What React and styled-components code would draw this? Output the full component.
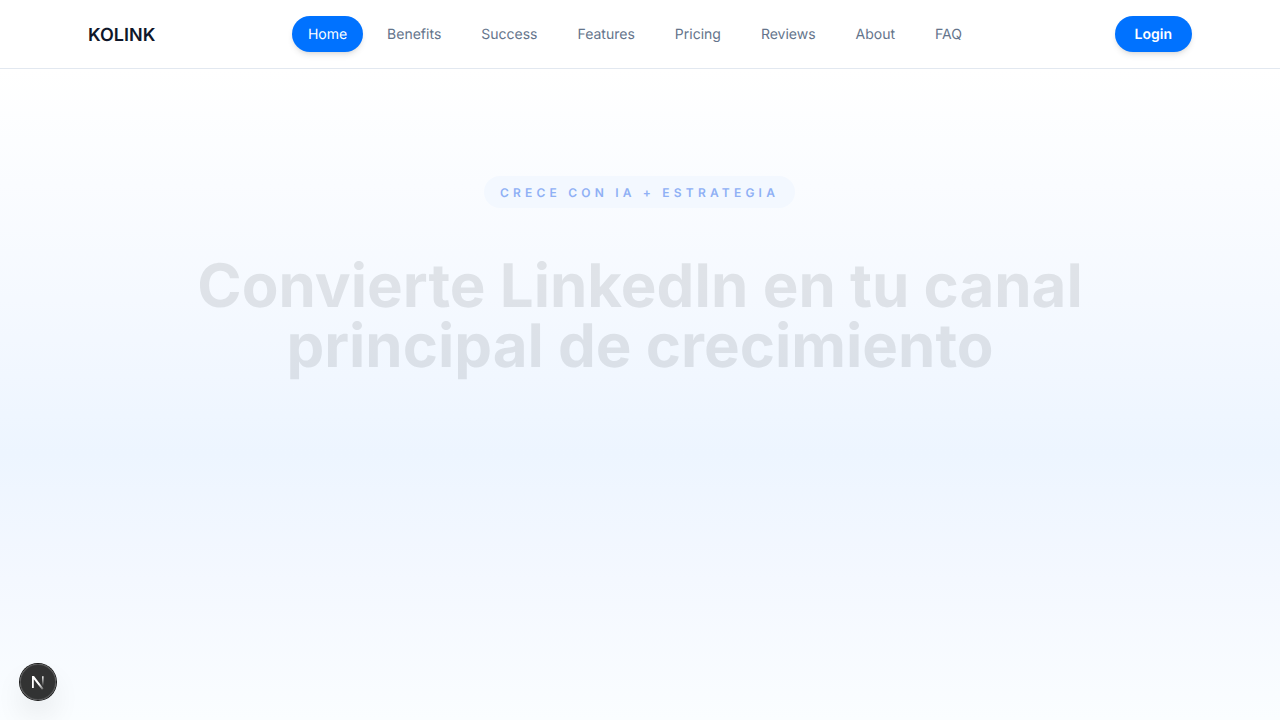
import React from "react";
import styled, { createGlobalStyle } from "styled-components";

const GlobalStyle = createGlobalStyle`
  * { box-sizing: border-box; }
  body { margin: 0; font-family: Inter, "Liberation Sans", sans-serif; background: #fff; overflow: hidden; -webkit-font-smoothing: antialiased; text-rendering: geometricPrecision; }
`;

const Page = styled.div`
  height: 720px;
  display: flex;
  flex-direction: column;
`;

const Header = styled.header`
  height: 69px;
  flex: none;
  border-bottom: 1px solid #e2e8f0;
  background: #fff;
  padding: 0 88px;
  display: flex;
  align-items: center;
  justify-content: space-between;
`;

const Brand = styled.a`
  padding-top: 3px;
  font-size: 18px;
  line-height: 28px;
  font-weight: 600;
  color: #0f172a;
`;

const Nav = styled.nav`
  display: flex;
  gap: 8px;
`;

const NavLink = styled.a`
  padding: 9px 16px 7px;
  border-radius: 999px;
  font-size: 14px;
  line-height: 20px;
  color: ${(p) => (p.$active ? "#fff" : "#64748b")};
  background: ${(p) => (p.$active ? "#0072ff" : "transparent")};
  box-shadow: ${(p) => (p.$active ? "0 4px 6px -1px rgba(0,0,0,.1), 0 2px 4px -2px rgba(0,0,0,.1)" : "none")};
`;

const LoginButton = styled.button`
  height: 36px;
  padding: 2px 20px 0;
  border: 0;
  border-radius: 999px;
  background: #0072ff;
  color: #fff;
  font: 600 14px/20px Inter, sans-serif;
  text-rendering: inherit;
  box-shadow: 0 4px 6px -1px rgba(0,0,0,.1), 0 2px 4px -2px rgba(0,0,0,.1);
`;

const Hero = styled.main`
  flex: 1;
  padding-top: 107px;
  display: flex;
  flex-direction: column;
  align-items: center;
  background: linear-gradient(to bottom, #fff 0, #f5f9ff 230px, #edf5ff 385px, #f4f8ff 510px, #fafdff 651px);
`;

const Eyebrow = styled.span`
  height: 32px;
  margin-right: 1px;
  padding: 9px 16px 7px;
  border-radius: 999px;
  background: #f3f8ff;
  color: #8fb0f5;
  font-size: 12px;
  line-height: 16px;
  font-weight: 600;
  letter-spacing: 4.2px;
  text-transform: uppercase;
`;

const Title = styled.h1`
  width: 896px;
  margin: 48px 0 0;
  font-size: 60px;
  line-height: 60px;
  font-weight: 700;
  text-align: center;
  color: rgba(15, 28, 26, 0.1);
`;

const DevBadge = styled.button`
  position: absolute;
  left: 20px;
  bottom: 20px;
  width: 36px;
  height: 36px;
  padding: 0;
  border: 0;
  border-radius: 50%;
  background: rgba(0, 0, 0, 0.8);
  box-shadow: 0 0 0 1px #171717, inset 0 0 0 1px hsla(0, 0%, 100%, 0.14), 0 16px 32px -8px rgba(0, 0, 0, 0.24);
  display: flex;
  align-items: center;
  justify-content: center;
`;

const Mark = styled.svg`
  flex: none;
`;

const links = ["Home", "Benefits", "Success", "Features", "Pricing", "Reviews", "About", "FAQ"];

export default function App() {
  return (
    <Page>
      <GlobalStyle />
      <Header>
        <Brand>KOLINK</Brand>
        <Nav>
          {links.map((l, i) => <NavLink key={l} $active={i === 0}>{l}</NavLink>)}
        </Nav>
        <LoginButton>Login</LoginButton>
      </Header>
      <Hero>
        <Eyebrow>Crece con IA + Estrategia</Eyebrow>
        <Title>Convierte LinkedIn en tu canal principal de crecimiento</Title>
      </Hero>
      <DevBadge aria-label="Developer tools">
        <Mark width="40" height="40" viewBox="0 0 40 40" fill="none">
          <defs>
            <linearGradient id="markDiagonal" x1="9" y1="8.5" x2="12.6" y2="13.4" gradientUnits="userSpaceOnUse">
              <stop stopColor="#fff" />
              <stop offset="1" stopColor="#fff" stopOpacity="0.3" />
            </linearGradient>
            <linearGradient id="markStem" x1="11.8" y1="1.3" x2="11.8" y2="11" gradientUnits="userSpaceOnUse">
              <stop stopColor="#fff" />
              <stop offset="1" stopColor="#fff" stopOpacity="0" />
            </linearGradient>
          </defs>
          <g transform="translate(13 13)">
            <path d="M11.83 1.33V12.5" stroke="url(#markStem)" strokeWidth="1.5" />
            <path d="M3 1H1V13H2.8V4.2L11 14.7L12.5 13.5Z" fill="url(#markDiagonal)" />
          </g>
        </Mark>
      </DevBadge>
    </Page>
  );
}
